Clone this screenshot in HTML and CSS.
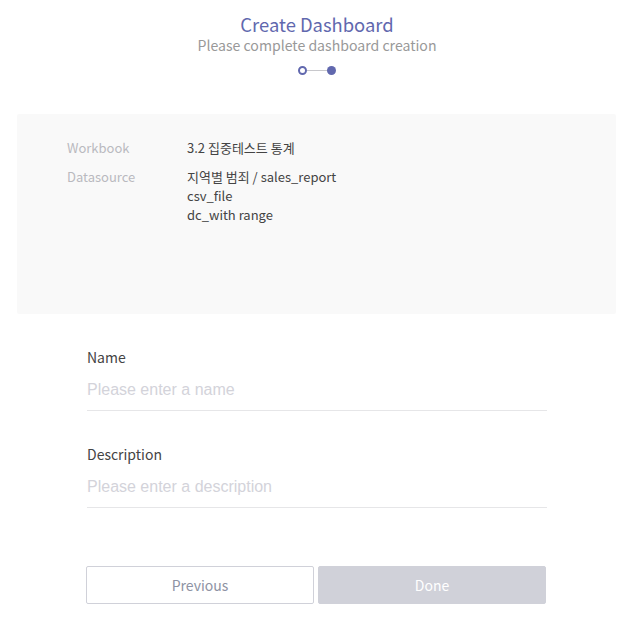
FILE: index.html
```html
<!DOCTYPE html>
<html lang="en">
<head>
<meta charset="utf-8">
<title>Create Dashboard</title>
<link rel="stylesheet" href="styles.css">
</head>
<body>
<div class="page">
  <header class="header">
    <h1 class="title">Create Dashboard</h1>
    <p class="subtitle">Please complete dashboard creation</p>
    <div class="steps">
      <span class="step step-done"></span>
      <span class="step-line"></span>
      <span class="step step-current"></span>
    </div>
  </header>

  <section class="info">
    <div class="info-row">
      <div class="info-label">Workbook</div>
      <div class="info-value">3.2 집중테스트 통계</div>
    </div>
    <div class="info-row">
      <div class="info-label">Datasource</div>
      <div class="info-value">
        <div>지역별 범죄 / sales_report</div>
        <div>csv_file</div>
        <div>dc_with range</div>
      </div>
    </div>
  </section>

  <form class="form">
    <div class="field">
      <label class="field-label" for="name">Name</label>
      <input class="field-input" id="name" type="text" placeholder="Please enter a name" autofocus>
    </div>
    <div class="field field-second">
      <label class="field-label" for="desc">Description</label>
      <input class="field-input" id="desc" type="text" placeholder="Please enter a description">
    </div>
    <div class="buttons">
      <button type="button" class="btn btn-prev">Previous</button>
      <button type="button" class="btn btn-done" disabled>Done</button>
    </div>
  </form>
</div>
</body>
</html>
```

FILE: styles.css
```css
* { box-sizing: border-box; }
html, body { margin: 0; padding: 0; background: #fff; }
body {
  font-family: "Noto Sans CJK KR", "Noto Sans", sans-serif;
  color: #444;
}
.page { width: 641px; }

.header {
  display: flex;
  flex-direction: column;
  align-items: center;
  padding: 12px 7px 0 0;
}
.title {
  margin: 0;
  font-size: 18.4px;
  line-height: 24px;
  font-weight: 400;
  color: #6168ae;
}
.subtitle {
  margin: 0;
  font-size: 14.1px;
  line-height: 18px;
  color: #999;
}
.steps {
  display: flex;
  align-items: center;
  margin-top: 12px;
}
.step {
  display: block;
  width: 9px;
  height: 9px;
  border-radius: 50%;
}
.step-done {
  border: 2px solid #6168ae;
  background: #fff;
}
.step-current {
  background: #6168ae;
}
.step-line {
  display: block;
  width: 20px;
  height: 1px;
  background: #c8c8cc;
}

.info {
  margin: 39px 0 0 17px;
  width: 599px;
  height: 200px;
  background: #f9f9f9;
  border-radius: 2px;
  padding: 24px 0 0 50px;
  font-size: 13px;
  line-height: 19px;
  display: flex;
  flex-direction: column;
  gap: 10px;
}
.info-row { display: flex; }
.info-label {
  width: 120px;
  color: #b9b9bf;
}
.info-value { color: #444; }

.form {
  margin: 33px 0 0 86px;
  width: 461px;
}
.field {
  display: flex;
  flex-direction: column;
  padding-left: 1px;
}
.field-second { margin-top: 33px; }
.field-label {
  font-size: 14px;
  line-height: 20px;
  color: #444;
}
.field-input {
  margin-top: 2px;
  height: 42px;
  padding: 0;
  border: none;
  border-bottom: 1px solid #e6e6e8;
  outline: none;
  font-family: "Liberation Sans", Arial, sans-serif;
  font-size: 16px;
  color: #444;
  background: transparent;
  caret-color: #333;
}
.field-input::placeholder { color: #d3d3da; }

.buttons {
  display: flex;
  gap: 4px;
  margin-top: 58px;
}
.btn {
  width: 228px;
  height: 38px;
  border-radius: 2px;
  font-family: "Noto Sans CJK KR", "Noto Sans", sans-serif;
  font-size: 14px;
  cursor: pointer;
}
.btn-prev {
  background: #fff;
  border: 1px solid #d0d1d9;
  color: #8e93a4;
}
.btn-done {
  background: #d0d1d9;
  border: 1px solid #d0d1d9;
  color: #fff;
}
```
